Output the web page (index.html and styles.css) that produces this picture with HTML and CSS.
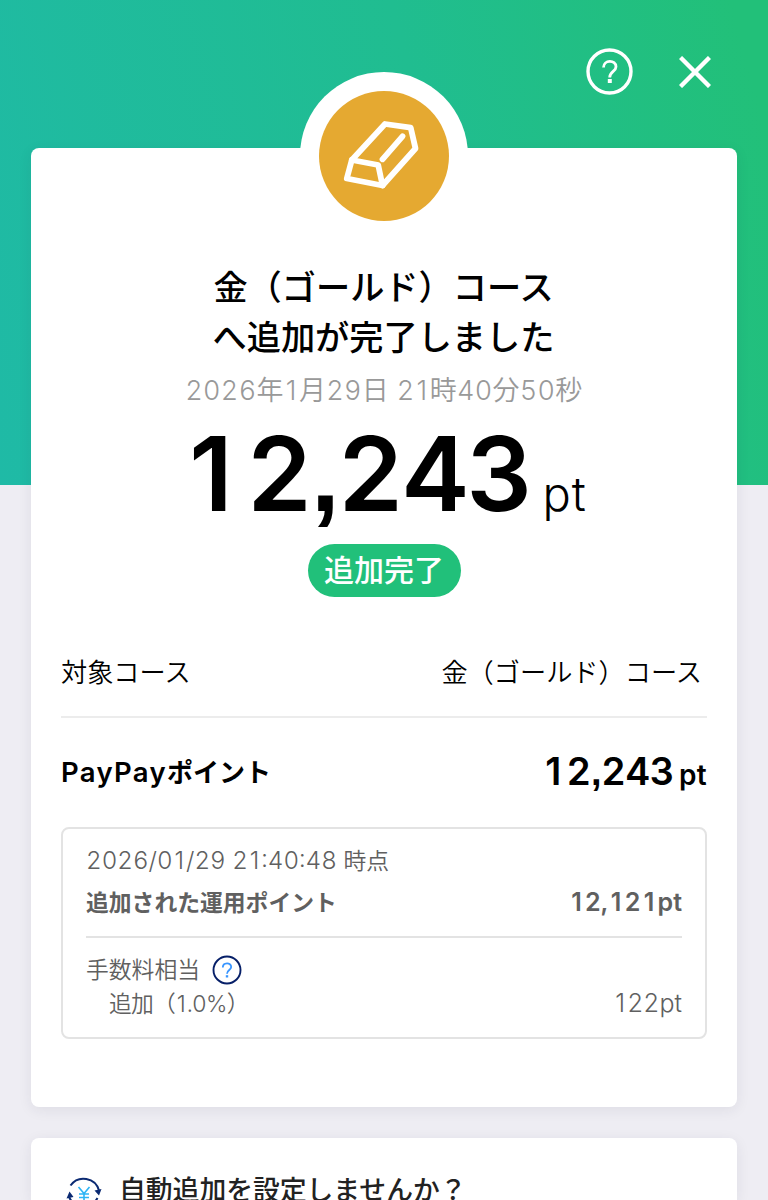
FILE: index.html
```html
<!DOCTYPE html>
<html lang="ja">
<head>
    <meta charset="utf-8" />
    <title>追加完了</title>
    <link rel="stylesheet" href="styles.css">
</head>

<body>
<div class="header">
    <svg class="ico_help" viewBox="0 0 48 48"><circle cx="23.500" cy="23.500" r="21.500" fill="none" stroke="#fff" stroke-width="3.400" /><path d="M17.500 19.500C17.500 11.500 30 11.500 30 18.800C30 23.500 23.700 23.500 23.700 29.500" fill="none" stroke="#fff" stroke-width="2.800" /><path d="M21.800 31h4v4h-4z" fill="#fff" /></svg>
    <svg class="ico_close" viewBox="0 0 32 32"><path d="M1.500 1.500L30.500 30.500M30.500 1.500L1.500 30.500" stroke="#fff" stroke-width="4.400" /></svg>
</div>
<div class="card result">
    <svg class="ico_gold" viewBox="0 0 168 168">
        <circle cx="84" cy="84" r="84" fill="#fff" />
        <circle cx="84" cy="84" r="65" fill="#e5a931" />
        <g fill="none" stroke="#fff" stroke-width="5.800" stroke-linejoin="round" stroke-linecap="round">
            <path d="M85 52L110.700 55.700L115.500 76.500L82.500 113.500L46.800 106.500L51.800 88Z" />
            <path d="M51.800 88L78.200 93L82.500 113.500M102.500 64.300L82.500 87.300" />
        </g>
    </svg>
    <h1 class="tit">金（ゴールド）コース<br>へ追加が完了しました</h1>
    <p class="date">2026年<em>1</em>月29日 2<em>1</em>時40分50秒</p>
    <p class="total"><b><em>1</em>2<i>,</i>243</b><span>pt</span></p>
    <p class="status"><span>追加完了</span></p>
    <div class="row course"><span>対象コース</span><span>金（ゴールド）コース</span></div>
    <div class="row point"><span class="name"><i>PayPay</i>ポイント</span><span class="num"><em>1</em>2<i>,</i>243<small>pt</small></span></div>
    <div class="detail">
        <p class="time"><i>2026/0<em>1</em>/29 2<em>1</em>:40:48 </i>時点</p>
        <div class="row added"><span>追加された運用ポイント</span><span class="num"><em>1</em>2,<em>1</em>2<em>1</em>pt</span></div>
        <div class="fee">
            <p class="fee_tit">手数料相当<svg class="ico_q" viewBox="0 0 30 30"><circle cx="15" cy="15" r="13.500" fill="none" stroke="#061f68" stroke-width="1.900" /><path d="M10.800 12.500C10.800 7 19.200 7 19.200 12C19.200 15 15 15.200 15 18.800" fill="none" stroke="#3895ff" stroke-width="1.800" /><path d="M13.800 20.200h2.400v2.300h-2.400z" fill="#3895ff" /></svg></p>
            <div class="row fee_row"><span class="rate">追加（<em>1</em>.0%）</span><span class="num"><em>1</em>22pt</span></div>
        </div>
    </div>
</div>
<div class="card auto">
    <svg class="ico_auto" viewBox="0 0 36 36">
        <path d="M4.500 9.500A16 16 0 0 1 33 14.500M31.500 22A16 16 0 0 1 3 21" fill="none" stroke="#0b2a72" stroke-width="2" />
        <path d="M28.500 14.500L35.500 13L33 19.500ZM.500 22.500L3.500 15.500L7.500 21Z" fill="#0b2a72" />
        <path d="M12.500 11L18 17.500L23.500 11M18 17.500V25M13 18H23M13 21.500H23" fill="none" stroke="#2cb4f5" stroke-width="1.600" />
    </svg>
    <h2>自動追加を設定しませんか？</h2>
</div>
</body>
</html>
```

FILE: styles.css
```css
* {box-sizing:border-box;}
html {height:1200px;overflow:hidden;}
body {height:1200px;overflow:hidden;margin:0;font-family:Inter, "Noto Sans CJK JP", sans-serif;font-variant-numeric:tabular-nums;color:#000;background:linear-gradient(75deg, #1fbaa6 0%, #20bd90 58%, #22c079 96%) 0 0 / 100% 485px no-repeat #eeedf3;}
h1, h2, p {margin:0;}
i, em {font-style:normal;}
em {margin:0 .08em;font-variant-numeric:normal;}
svg {display:block;flex:none;}
.header {display:flex;justify-content:flex-end;align-items:center;height:148px;padding:0 57px 5px 0;gap:45px;}
.ico_help {width:48px;height:48px;}
.ico_close {width:32px;height:32px;}
.card {margin:0 31px;background-color:#fff;border-radius:8px;box-shadow:0 3px 14px rgba(40,35,60,.08);}
.result {height:959px;padding:0 30px;}
.ico_gold {width:168px;height:168px;margin:0 auto;transform:translateY(-76px);margin-bottom:-53px;}
.tit {padding-right:1px;font-size:34.200px;line-height:50px;font-weight:500;text-align:center;}
.date {height:57px;font-size:27px;line-height:56px;font-weight:350;letter-spacing:.3px;color:#999;text-align:center;white-space:nowrap;}
.total {display:flex;justify-content:center;align-items:baseline;height:124px;padding-left:8px;line-height:108px;}
.total b {font-size:103px;font-weight:600;letter-spacing:-2px;}
.total em {margin:0 .15em 0 0;}
.total i {font-family:"Liberation Sans", sans-serif;font-weight:bold;}
.total span {margin-left:11px;font-size:47px;font-weight:300;letter-spacing:1px;}
.status {display:flex;justify-content:center;}
.status span {width:153px;height:53px;border-radius:27px;font-size:30px;line-height:53px;font-weight:500;color:#fff;text-align:center;background-color:#21c07a;}
.row {display:flex;justify-content:space-between;align-items:center;white-space:nowrap;}
.course {height:92px;margin-top:29px;padding-right:5px;font-size:26.200px;font-weight:350;border-bottom:2px solid #ececec;}
.point {height:109px;font-size:26px;font-weight:600;}
.point .name {padding-bottom:4px;}
.point .name i {font-size:27.500px;letter-spacing:1.300px;}
.point .num {padding-bottom:3px;font-size:38px;letter-spacing:-.3px;}
.point .num em {margin-right:.150em;}
.point .num i {font-family:"Liberation Sans", sans-serif;}
.point small {margin-left:5px;font-size:28px;letter-spacing:.3px;}
.detail {height:212px;padding:15px 23px 0;border:2px solid #e3e3e3;border-radius:8px;font-size:22.800px;font-weight:350;color:#606060;}
.time {line-height:34px;}
.time i {font-size:24.200px;}
.added {height:60px;padding-bottom:11px;font-weight:600;border-bottom:2px solid #e3e3e3;}
.added .num {font-size:25px;}
.added .num em {margin:0 .125em;}
.fee_tit {display:flex;align-items:center;gap:12px;height:32px;margin-top:14px;}
.ico_q {width:30px;height:30px;transform:translateY(2px);}
.fee_row {height:36px;padding-left:23px;}
.fee_row .rate {letter-spacing:-.8px;}
.fee_row .num {padding-top:2px;font-size:25px;}
.auto {display:flex;gap:17px;height:62px;margin-top:31px;padding:35px 35px 0;border-radius:8px 8px 0 0;}
.ico_auto {width:36px;height:36px;margin-top:3px;}
.auto h2 {font-size:26.800px;line-height:34px;font-weight:500;color:#222;}
```
